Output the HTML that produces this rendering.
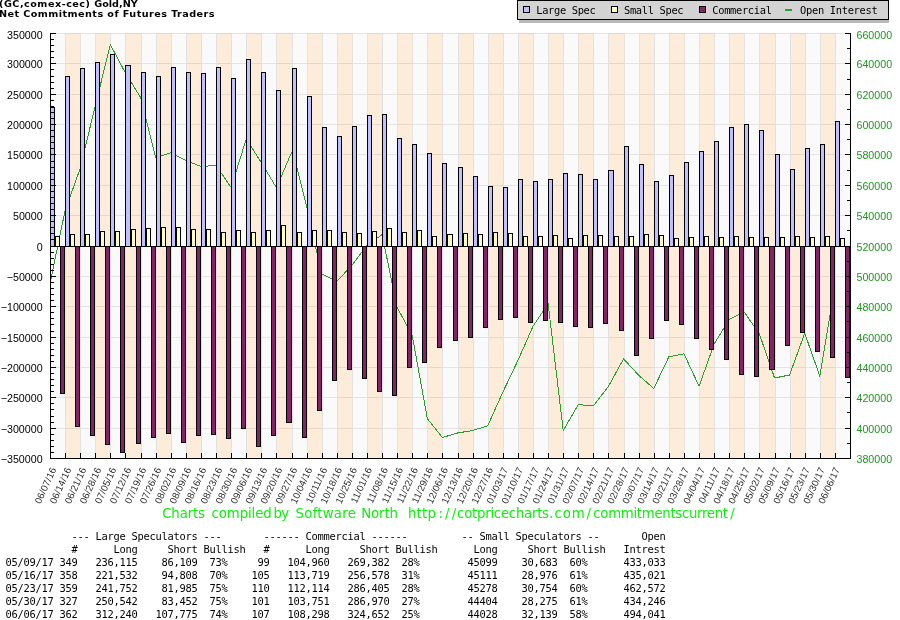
<!DOCTYPE html>
<html><head><meta charset="utf-8"><title>Net Commitments of Futures Traders</title>
<style>
html,body{margin:0;padding:0;background:#fff;}
body{width:900px;height:620px;position:relative;overflow:hidden;}
.t{position:absolute;left:-1px;white-space:pre;font-family:"DejaVu Sans","Liberation Sans",sans-serif;font-weight:bold;font-size:8px;line-height:10px;color:#000;transform-origin:0 0;transform:scaleX(1.205);letter-spacing:0.3px;}
.f{position:absolute;left:162.5px;top:506px;white-space:pre;font-family:"DejaVu Sans","Liberation Sans",sans-serif;font-size:13.33px;line-height:16px;color:#0cf00c;letter-spacing:0.185px;}
.f span{position:absolute;top:0;}
pre.tb{position:absolute;left:5.4px;top:529.7px;margin:0;font-family:"DejaVu Sans Mono","Liberation Mono",monospace;font-size:10.4px;line-height:13px;letter-spacing:-0.255px;color:#000;}
</style></head><body><div id="w" style="position:absolute;left:0;top:0;width:900px;height:620px;will-change:transform;">
<svg width="900" height="620" viewBox="0 0 900 620" style="position:absolute;left:0;top:0">
<g shape-rendering="crispEdges">
<rect x="50" y="33" width="800" height="425" fill="#fafafa"/>
<rect x="65" y="33" width="15" height="425" fill="#fdecd9"/>
<rect x="95" y="33" width="15" height="425" fill="#fdecd9"/>
<rect x="125" y="33" width="16" height="425" fill="#fdecd9"/>
<rect x="156" y="33" width="15" height="425" fill="#fdecd9"/>
<rect x="186" y="33" width="15" height="425" fill="#fdecd9"/>
<rect x="216" y="33" width="15" height="425" fill="#fdecd9"/>
<rect x="246" y="33" width="15" height="425" fill="#fdecd9"/>
<rect x="276" y="33" width="16" height="425" fill="#fdecd9"/>
<rect x="307" y="33" width="15" height="425" fill="#fdecd9"/>
<rect x="337" y="33" width="15" height="425" fill="#fdecd9"/>
<rect x="367" y="33" width="15" height="425" fill="#fdecd9"/>
<rect x="397" y="33" width="15" height="425" fill="#fdecd9"/>
<rect x="427" y="33" width="15" height="425" fill="#fdecd9"/>
<rect x="458" y="33" width="15" height="425" fill="#fdecd9"/>
<rect x="488" y="33" width="15" height="425" fill="#fdecd9"/>
<rect x="518" y="33" width="15" height="425" fill="#fdecd9"/>
<rect x="548" y="33" width="15" height="425" fill="#fdecd9"/>
<rect x="578" y="33" width="15" height="425" fill="#fdecd9"/>
<rect x="608" y="33" width="16" height="425" fill="#fdecd9"/>
<rect x="639" y="33" width="15" height="425" fill="#fdecd9"/>
<rect x="669" y="33" width="15" height="425" fill="#fdecd9"/>
<rect x="699" y="33" width="15" height="425" fill="#fdecd9"/>
<rect x="729" y="33" width="15" height="425" fill="#fdecd9"/>
<rect x="759" y="33" width="16" height="425" fill="#fdecd9"/>
<rect x="790" y="33" width="15" height="425" fill="#fdecd9"/>
<rect x="820" y="33" width="15" height="425" fill="#fdecd9"/>
<rect x="50" y="33" width="800" height="1" fill="rgba(20,10,0,0.095)"/>
<rect x="50" y="63" width="800" height="1" fill="rgba(20,10,0,0.095)"/>
<rect x="50" y="94" width="800" height="1" fill="rgba(20,10,0,0.095)"/>
<rect x="50" y="124" width="800" height="1" fill="rgba(20,10,0,0.095)"/>
<rect x="50" y="154" width="800" height="1" fill="rgba(20,10,0,0.095)"/>
<rect x="50" y="185" width="800" height="1" fill="rgba(20,10,0,0.095)"/>
<rect x="50" y="215" width="800" height="1" fill="rgba(20,10,0,0.095)"/>
<rect x="50" y="246" width="800" height="1" fill="rgba(20,10,0,0.095)"/>
<rect x="50" y="276" width="800" height="1" fill="rgba(20,10,0,0.095)"/>
<rect x="50" y="306" width="800" height="1" fill="rgba(20,10,0,0.095)"/>
<rect x="50" y="337" width="800" height="1" fill="rgba(20,10,0,0.095)"/>
<rect x="50" y="367" width="800" height="1" fill="rgba(20,10,0,0.095)"/>
<rect x="50" y="397" width="800" height="1" fill="rgba(20,10,0,0.095)"/>
<rect x="50" y="428" width="800" height="1" fill="rgba(20,10,0,0.095)"/>
<rect x="50" y="458" width="800" height="1" fill="rgba(20,10,0,0.095)"/>
<rect x="65" y="33" width="1" height="425" fill="#e2e2e3"/>
<rect x="80" y="33" width="1" height="425" fill="#e2e2e3"/>
<rect x="95" y="33" width="1" height="425" fill="#e2e2e3"/>
<rect x="110" y="33" width="1" height="425" fill="#e2e2e3"/>
<rect x="125" y="33" width="1" height="425" fill="#e2e2e3"/>
<rect x="141" y="33" width="1" height="425" fill="#e2e2e3"/>
<rect x="156" y="33" width="1" height="425" fill="#e2e2e3"/>
<rect x="171" y="33" width="1" height="425" fill="#e2e2e3"/>
<rect x="186" y="33" width="1" height="425" fill="#e2e2e3"/>
<rect x="201" y="33" width="1" height="425" fill="#e2e2e3"/>
<rect x="216" y="33" width="1" height="425" fill="#e2e2e3"/>
<rect x="231" y="33" width="1" height="425" fill="#e2e2e3"/>
<rect x="246" y="33" width="1" height="425" fill="#e2e2e3"/>
<rect x="261" y="33" width="1" height="425" fill="#e2e2e3"/>
<rect x="276" y="33" width="1" height="425" fill="#e2e2e3"/>
<rect x="292" y="33" width="1" height="425" fill="#e2e2e3"/>
<rect x="307" y="33" width="1" height="425" fill="#e2e2e3"/>
<rect x="322" y="33" width="1" height="425" fill="#e2e2e3"/>
<rect x="337" y="33" width="1" height="425" fill="#e2e2e3"/>
<rect x="352" y="33" width="1" height="425" fill="#e2e2e3"/>
<rect x="367" y="33" width="1" height="425" fill="#e2e2e3"/>
<rect x="382" y="33" width="1" height="425" fill="#e2e2e3"/>
<rect x="397" y="33" width="1" height="425" fill="#e2e2e3"/>
<rect x="412" y="33" width="1" height="425" fill="#e2e2e3"/>
<rect x="427" y="33" width="1" height="425" fill="#e2e2e3"/>
<rect x="442" y="33" width="1" height="425" fill="#e2e2e3"/>
<rect x="458" y="33" width="1" height="425" fill="#e2e2e3"/>
<rect x="473" y="33" width="1" height="425" fill="#e2e2e3"/>
<rect x="488" y="33" width="1" height="425" fill="#e2e2e3"/>
<rect x="503" y="33" width="1" height="425" fill="#e2e2e3"/>
<rect x="518" y="33" width="1" height="425" fill="#e2e2e3"/>
<rect x="533" y="33" width="1" height="425" fill="#e2e2e3"/>
<rect x="548" y="33" width="1" height="425" fill="#e2e2e3"/>
<rect x="563" y="33" width="1" height="425" fill="#e2e2e3"/>
<rect x="578" y="33" width="1" height="425" fill="#e2e2e3"/>
<rect x="593" y="33" width="1" height="425" fill="#e2e2e3"/>
<rect x="608" y="33" width="1" height="425" fill="#e2e2e3"/>
<rect x="624" y="33" width="1" height="425" fill="#e2e2e3"/>
<rect x="639" y="33" width="1" height="425" fill="#e2e2e3"/>
<rect x="654" y="33" width="1" height="425" fill="#e2e2e3"/>
<rect x="669" y="33" width="1" height="425" fill="#e2e2e3"/>
<rect x="684" y="33" width="1" height="425" fill="#e2e2e3"/>
<rect x="699" y="33" width="1" height="425" fill="#e2e2e3"/>
<rect x="714" y="33" width="1" height="425" fill="#e2e2e3"/>
<rect x="729" y="33" width="1" height="425" fill="#e2e2e3"/>
<rect x="744" y="33" width="1" height="425" fill="#e2e2e3"/>
<rect x="759" y="33" width="1" height="425" fill="#e2e2e3"/>
<rect x="775" y="33" width="1" height="425" fill="#e2e2e3"/>
<rect x="790" y="33" width="1" height="425" fill="#e2e2e3"/>
<rect x="805" y="33" width="1" height="425" fill="#e2e2e3"/>
<rect x="820" y="33" width="1" height="425" fill="#e2e2e3"/>
<rect x="835" y="33" width="1" height="425" fill="#e2e2e3"/>
</g>
<clipPath id="pc"><rect x="51" y="33" width="799" height="425"/></clipPath>
<polyline shape-rendering="crispEdges" clip-path="url(#pc)" points="50.00,283.50 65.09,210.50 80.19,168.50 95.28,105.50 110.38,44.70 125.47,73.00 140.57,97.50 155.66,158.00 170.75,152.70 185.85,160.50 200.94,166.50 216.04,165.50 231.13,187.50 246.23,139.10 261.32,162.50 276.42,187.70 291.51,152.50 297.20,168.60 306.60,206.50 321.70,274.00 336.79,281.30 351.89,265.50 366.98,245.20 382.08,234.70 397.17,307.50 412.26,335.50 427.36,418.80 442.45,437.50 457.55,433.00 472.64,430.50 487.74,425.80 502.83,392.20 517.92,360.50 533.02,326.30 548.11,303.50 563.21,430.50 578.30,404.70 593.40,405.80 608.49,386.30 623.58,358.80 638.68,375.30 653.77,388.50 668.87,356.80 683.96,353.80 699.06,386.30 714.15,344.00 729.25,319.20 744.34,312.20 759.43,334.00 774.53,378.00 789.62,375.00 804.72,333.20 819.81,376.20 834.91,285.40" fill="none" stroke="#2b9d2b" stroke-width="1.0" stroke-linejoin="round"/>
<g shape-rendering="crispEdges">
<rect x="50" y="107" width="5" height="140" fill="#000"/>
<rect x="51" y="108" width="3" height="138" fill="#c0c0ff"/>
<rect x="55" y="236" width="5" height="11" fill="#000"/>
<rect x="56" y="237" width="3" height="9" fill="#ffffc0"/>
<rect x="60" y="246" width="5" height="148" fill="#000"/>
<rect x="61" y="247" width="3" height="146" fill="#852268"/>
<rect x="65" y="76" width="5" height="171" fill="#000"/>
<rect x="66" y="77" width="3" height="169" fill="#c0c0ff"/>
<rect x="70" y="234" width="5" height="13" fill="#000"/>
<rect x="71" y="235" width="3" height="11" fill="#ffffc0"/>
<rect x="75" y="246" width="5" height="181" fill="#000"/>
<rect x="76" y="247" width="3" height="179" fill="#852268"/>
<rect x="80" y="68" width="5" height="179" fill="#000"/>
<rect x="81" y="69" width="3" height="177" fill="#c0c0ff"/>
<rect x="85" y="234" width="5" height="13" fill="#000"/>
<rect x="86" y="235" width="3" height="11" fill="#ffffc0"/>
<rect x="90" y="246" width="5" height="190" fill="#000"/>
<rect x="91" y="247" width="3" height="188" fill="#852268"/>
<rect x="95" y="62" width="5" height="185" fill="#000"/>
<rect x="96" y="63" width="3" height="183" fill="#c0c0ff"/>
<rect x="100" y="231" width="5" height="16" fill="#000"/>
<rect x="101" y="232" width="3" height="14" fill="#ffffc0"/>
<rect x="105" y="246" width="5" height="199" fill="#000"/>
<rect x="106" y="247" width="3" height="197" fill="#852268"/>
<rect x="110" y="54" width="5" height="193" fill="#000"/>
<rect x="111" y="55" width="3" height="191" fill="#c0c0ff"/>
<rect x="115" y="231" width="5" height="16" fill="#000"/>
<rect x="116" y="232" width="3" height="14" fill="#ffffc0"/>
<rect x="120" y="246" width="5" height="207" fill="#000"/>
<rect x="121" y="247" width="3" height="205" fill="#852268"/>
<rect x="125" y="65" width="6" height="182" fill="#000"/>
<rect x="126" y="66" width="4" height="180" fill="#c0c0ff"/>
<rect x="131" y="229" width="5" height="18" fill="#000"/>
<rect x="132" y="230" width="3" height="16" fill="#ffffc0"/>
<rect x="136" y="246" width="5" height="198" fill="#000"/>
<rect x="137" y="247" width="3" height="196" fill="#852268"/>
<rect x="141" y="72" width="5" height="175" fill="#000"/>
<rect x="142" y="73" width="3" height="173" fill="#c0c0ff"/>
<rect x="146" y="228" width="5" height="19" fill="#000"/>
<rect x="147" y="229" width="3" height="17" fill="#ffffc0"/>
<rect x="151" y="246" width="5" height="192" fill="#000"/>
<rect x="152" y="247" width="3" height="190" fill="#852268"/>
<rect x="156" y="76" width="5" height="171" fill="#000"/>
<rect x="157" y="77" width="3" height="169" fill="#c0c0ff"/>
<rect x="161" y="227" width="5" height="20" fill="#000"/>
<rect x="162" y="228" width="3" height="18" fill="#ffffc0"/>
<rect x="166" y="246" width="5" height="188" fill="#000"/>
<rect x="167" y="247" width="3" height="186" fill="#852268"/>
<rect x="171" y="67" width="5" height="180" fill="#000"/>
<rect x="172" y="68" width="3" height="178" fill="#c0c0ff"/>
<rect x="176" y="227" width="5" height="20" fill="#000"/>
<rect x="177" y="228" width="3" height="18" fill="#ffffc0"/>
<rect x="181" y="246" width="5" height="197" fill="#000"/>
<rect x="182" y="247" width="3" height="195" fill="#852268"/>
<rect x="186" y="72" width="5" height="175" fill="#000"/>
<rect x="187" y="73" width="3" height="173" fill="#c0c0ff"/>
<rect x="191" y="229" width="5" height="18" fill="#000"/>
<rect x="192" y="230" width="3" height="16" fill="#ffffc0"/>
<rect x="196" y="246" width="5" height="190" fill="#000"/>
<rect x="197" y="247" width="3" height="188" fill="#852268"/>
<rect x="201" y="73" width="5" height="174" fill="#000"/>
<rect x="202" y="74" width="3" height="172" fill="#c0c0ff"/>
<rect x="206" y="229" width="5" height="18" fill="#000"/>
<rect x="207" y="230" width="3" height="16" fill="#ffffc0"/>
<rect x="211" y="246" width="5" height="189" fill="#000"/>
<rect x="212" y="247" width="3" height="187" fill="#852268"/>
<rect x="216" y="67" width="5" height="180" fill="#000"/>
<rect x="217" y="68" width="3" height="178" fill="#c0c0ff"/>
<rect x="221" y="232" width="5" height="15" fill="#000"/>
<rect x="222" y="233" width="3" height="13" fill="#ffffc0"/>
<rect x="226" y="246" width="5" height="193" fill="#000"/>
<rect x="227" y="247" width="3" height="191" fill="#852268"/>
<rect x="231" y="78" width="5" height="169" fill="#000"/>
<rect x="232" y="79" width="3" height="167" fill="#c0c0ff"/>
<rect x="236" y="230" width="5" height="17" fill="#000"/>
<rect x="237" y="231" width="3" height="15" fill="#ffffc0"/>
<rect x="241" y="246" width="5" height="183" fill="#000"/>
<rect x="242" y="247" width="3" height="181" fill="#852268"/>
<rect x="246" y="59" width="5" height="188" fill="#000"/>
<rect x="247" y="60" width="3" height="186" fill="#c0c0ff"/>
<rect x="251" y="232" width="5" height="15" fill="#000"/>
<rect x="252" y="233" width="3" height="13" fill="#ffffc0"/>
<rect x="256" y="246" width="5" height="201" fill="#000"/>
<rect x="257" y="247" width="3" height="199" fill="#852268"/>
<rect x="261" y="72" width="5" height="175" fill="#000"/>
<rect x="262" y="73" width="3" height="173" fill="#c0c0ff"/>
<rect x="266" y="230" width="5" height="17" fill="#000"/>
<rect x="267" y="231" width="3" height="15" fill="#ffffc0"/>
<rect x="271" y="246" width="5" height="190" fill="#000"/>
<rect x="272" y="247" width="3" height="188" fill="#852268"/>
<rect x="276" y="90" width="5" height="157" fill="#000"/>
<rect x="277" y="91" width="3" height="155" fill="#c0c0ff"/>
<rect x="281" y="225" width="5" height="22" fill="#000"/>
<rect x="282" y="226" width="3" height="20" fill="#ffffc0"/>
<rect x="286" y="246" width="6" height="177" fill="#000"/>
<rect x="287" y="247" width="4" height="175" fill="#852268"/>
<rect x="292" y="68" width="5" height="179" fill="#000"/>
<rect x="293" y="69" width="3" height="177" fill="#c0c0ff"/>
<rect x="297" y="232" width="5" height="15" fill="#000"/>
<rect x="298" y="233" width="3" height="13" fill="#ffffc0"/>
<rect x="302" y="246" width="5" height="192" fill="#000"/>
<rect x="303" y="247" width="3" height="190" fill="#852268"/>
<rect x="307" y="96" width="5" height="151" fill="#000"/>
<rect x="308" y="97" width="3" height="149" fill="#c0c0ff"/>
<rect x="312" y="230" width="5" height="17" fill="#000"/>
<rect x="313" y="231" width="3" height="15" fill="#ffffc0"/>
<rect x="317" y="246" width="5" height="165" fill="#000"/>
<rect x="318" y="247" width="3" height="163" fill="#852268"/>
<rect x="322" y="127" width="5" height="120" fill="#000"/>
<rect x="323" y="128" width="3" height="118" fill="#c0c0ff"/>
<rect x="327" y="230" width="5" height="17" fill="#000"/>
<rect x="328" y="231" width="3" height="15" fill="#ffffc0"/>
<rect x="332" y="246" width="5" height="135" fill="#000"/>
<rect x="333" y="247" width="3" height="133" fill="#852268"/>
<rect x="337" y="136" width="5" height="111" fill="#000"/>
<rect x="338" y="137" width="3" height="109" fill="#c0c0ff"/>
<rect x="342" y="232" width="5" height="15" fill="#000"/>
<rect x="343" y="233" width="3" height="13" fill="#ffffc0"/>
<rect x="347" y="246" width="5" height="124" fill="#000"/>
<rect x="348" y="247" width="3" height="122" fill="#852268"/>
<rect x="352" y="126" width="5" height="121" fill="#000"/>
<rect x="353" y="127" width="3" height="119" fill="#c0c0ff"/>
<rect x="357" y="233" width="5" height="14" fill="#000"/>
<rect x="358" y="234" width="3" height="12" fill="#ffffc0"/>
<rect x="362" y="246" width="5" height="133" fill="#000"/>
<rect x="363" y="247" width="3" height="131" fill="#852268"/>
<rect x="367" y="115" width="5" height="132" fill="#000"/>
<rect x="368" y="116" width="3" height="130" fill="#c0c0ff"/>
<rect x="372" y="231" width="5" height="16" fill="#000"/>
<rect x="373" y="232" width="3" height="14" fill="#ffffc0"/>
<rect x="377" y="246" width="5" height="146" fill="#000"/>
<rect x="378" y="247" width="3" height="144" fill="#852268"/>
<rect x="382" y="114" width="5" height="133" fill="#000"/>
<rect x="383" y="115" width="3" height="131" fill="#c0c0ff"/>
<rect x="387" y="228" width="5" height="19" fill="#000"/>
<rect x="388" y="229" width="3" height="17" fill="#ffffc0"/>
<rect x="392" y="246" width="5" height="150" fill="#000"/>
<rect x="393" y="247" width="3" height="148" fill="#852268"/>
<rect x="397" y="138" width="5" height="109" fill="#000"/>
<rect x="398" y="139" width="3" height="107" fill="#c0c0ff"/>
<rect x="402" y="232" width="5" height="15" fill="#000"/>
<rect x="403" y="233" width="3" height="13" fill="#ffffc0"/>
<rect x="407" y="246" width="5" height="122" fill="#000"/>
<rect x="408" y="247" width="3" height="120" fill="#852268"/>
<rect x="412" y="144" width="5" height="103" fill="#000"/>
<rect x="413" y="145" width="3" height="101" fill="#c0c0ff"/>
<rect x="417" y="230" width="5" height="17" fill="#000"/>
<rect x="418" y="231" width="3" height="15" fill="#ffffc0"/>
<rect x="422" y="246" width="5" height="117" fill="#000"/>
<rect x="423" y="247" width="3" height="115" fill="#852268"/>
<rect x="427" y="153" width="5" height="94" fill="#000"/>
<rect x="428" y="154" width="3" height="92" fill="#c0c0ff"/>
<rect x="432" y="236" width="5" height="11" fill="#000"/>
<rect x="433" y="237" width="3" height="9" fill="#ffffc0"/>
<rect x="437" y="246" width="5" height="102" fill="#000"/>
<rect x="438" y="247" width="3" height="100" fill="#852268"/>
<rect x="442" y="163" width="5" height="84" fill="#000"/>
<rect x="443" y="164" width="3" height="82" fill="#c0c0ff"/>
<rect x="447" y="234" width="6" height="13" fill="#000"/>
<rect x="448" y="235" width="4" height="11" fill="#ffffc0"/>
<rect x="453" y="246" width="5" height="95" fill="#000"/>
<rect x="454" y="247" width="3" height="93" fill="#852268"/>
<rect x="458" y="167" width="5" height="80" fill="#000"/>
<rect x="459" y="168" width="3" height="78" fill="#c0c0ff"/>
<rect x="463" y="233" width="5" height="14" fill="#000"/>
<rect x="464" y="234" width="3" height="12" fill="#ffffc0"/>
<rect x="468" y="246" width="5" height="92" fill="#000"/>
<rect x="469" y="247" width="3" height="90" fill="#852268"/>
<rect x="473" y="176" width="5" height="71" fill="#000"/>
<rect x="474" y="177" width="3" height="69" fill="#c0c0ff"/>
<rect x="478" y="234" width="5" height="13" fill="#000"/>
<rect x="479" y="235" width="3" height="11" fill="#ffffc0"/>
<rect x="483" y="246" width="5" height="82" fill="#000"/>
<rect x="484" y="247" width="3" height="80" fill="#852268"/>
<rect x="488" y="186" width="5" height="61" fill="#000"/>
<rect x="489" y="187" width="3" height="59" fill="#c0c0ff"/>
<rect x="493" y="232" width="5" height="15" fill="#000"/>
<rect x="494" y="233" width="3" height="13" fill="#ffffc0"/>
<rect x="498" y="246" width="5" height="74" fill="#000"/>
<rect x="499" y="247" width="3" height="72" fill="#852268"/>
<rect x="503" y="187" width="5" height="60" fill="#000"/>
<rect x="504" y="188" width="3" height="58" fill="#c0c0ff"/>
<rect x="508" y="233" width="5" height="14" fill="#000"/>
<rect x="509" y="234" width="3" height="12" fill="#ffffc0"/>
<rect x="513" y="246" width="5" height="72" fill="#000"/>
<rect x="514" y="247" width="3" height="70" fill="#852268"/>
<rect x="518" y="179" width="5" height="68" fill="#000"/>
<rect x="519" y="180" width="3" height="66" fill="#c0c0ff"/>
<rect x="523" y="236" width="5" height="11" fill="#000"/>
<rect x="524" y="237" width="3" height="9" fill="#ffffc0"/>
<rect x="528" y="246" width="5" height="77" fill="#000"/>
<rect x="529" y="247" width="3" height="75" fill="#852268"/>
<rect x="533" y="181" width="5" height="66" fill="#000"/>
<rect x="534" y="182" width="3" height="64" fill="#c0c0ff"/>
<rect x="538" y="236" width="5" height="11" fill="#000"/>
<rect x="539" y="237" width="3" height="9" fill="#ffffc0"/>
<rect x="543" y="246" width="5" height="75" fill="#000"/>
<rect x="544" y="247" width="3" height="73" fill="#852268"/>
<rect x="548" y="179" width="5" height="68" fill="#000"/>
<rect x="549" y="180" width="3" height="66" fill="#c0c0ff"/>
<rect x="553" y="235" width="5" height="12" fill="#000"/>
<rect x="554" y="236" width="3" height="10" fill="#ffffc0"/>
<rect x="558" y="246" width="5" height="77" fill="#000"/>
<rect x="559" y="247" width="3" height="75" fill="#852268"/>
<rect x="563" y="173" width="5" height="74" fill="#000"/>
<rect x="564" y="174" width="3" height="72" fill="#c0c0ff"/>
<rect x="568" y="238" width="5" height="9" fill="#000"/>
<rect x="569" y="239" width="3" height="7" fill="#ffffc0"/>
<rect x="573" y="246" width="5" height="81" fill="#000"/>
<rect x="574" y="247" width="3" height="79" fill="#852268"/>
<rect x="578" y="174" width="5" height="73" fill="#000"/>
<rect x="579" y="175" width="3" height="71" fill="#c0c0ff"/>
<rect x="583" y="235" width="5" height="12" fill="#000"/>
<rect x="584" y="236" width="3" height="10" fill="#ffffc0"/>
<rect x="588" y="246" width="5" height="82" fill="#000"/>
<rect x="589" y="247" width="3" height="80" fill="#852268"/>
<rect x="593" y="179" width="5" height="68" fill="#000"/>
<rect x="594" y="180" width="3" height="66" fill="#c0c0ff"/>
<rect x="598" y="235" width="5" height="12" fill="#000"/>
<rect x="599" y="236" width="3" height="10" fill="#ffffc0"/>
<rect x="603" y="246" width="5" height="78" fill="#000"/>
<rect x="604" y="247" width="3" height="76" fill="#852268"/>
<rect x="608" y="170" width="6" height="77" fill="#000"/>
<rect x="609" y="171" width="4" height="75" fill="#c0c0ff"/>
<rect x="614" y="236" width="5" height="11" fill="#000"/>
<rect x="615" y="237" width="3" height="9" fill="#ffffc0"/>
<rect x="619" y="246" width="5" height="85" fill="#000"/>
<rect x="620" y="247" width="3" height="83" fill="#852268"/>
<rect x="624" y="146" width="5" height="101" fill="#000"/>
<rect x="625" y="147" width="3" height="99" fill="#c0c0ff"/>
<rect x="629" y="236" width="5" height="11" fill="#000"/>
<rect x="630" y="237" width="3" height="9" fill="#ffffc0"/>
<rect x="634" y="246" width="5" height="110" fill="#000"/>
<rect x="635" y="247" width="3" height="108" fill="#852268"/>
<rect x="639" y="164" width="5" height="83" fill="#000"/>
<rect x="640" y="165" width="3" height="81" fill="#c0c0ff"/>
<rect x="644" y="234" width="5" height="13" fill="#000"/>
<rect x="645" y="235" width="3" height="11" fill="#ffffc0"/>
<rect x="649" y="246" width="5" height="93" fill="#000"/>
<rect x="650" y="247" width="3" height="91" fill="#852268"/>
<rect x="654" y="181" width="5" height="66" fill="#000"/>
<rect x="655" y="182" width="3" height="64" fill="#c0c0ff"/>
<rect x="659" y="235" width="5" height="12" fill="#000"/>
<rect x="660" y="236" width="3" height="10" fill="#ffffc0"/>
<rect x="664" y="246" width="5" height="75" fill="#000"/>
<rect x="665" y="247" width="3" height="73" fill="#852268"/>
<rect x="669" y="175" width="5" height="72" fill="#000"/>
<rect x="670" y="176" width="3" height="70" fill="#c0c0ff"/>
<rect x="674" y="238" width="5" height="9" fill="#000"/>
<rect x="675" y="239" width="3" height="7" fill="#ffffc0"/>
<rect x="679" y="246" width="5" height="79" fill="#000"/>
<rect x="680" y="247" width="3" height="77" fill="#852268"/>
<rect x="684" y="162" width="5" height="85" fill="#000"/>
<rect x="685" y="163" width="3" height="83" fill="#c0c0ff"/>
<rect x="689" y="237" width="5" height="10" fill="#000"/>
<rect x="690" y="238" width="3" height="8" fill="#ffffc0"/>
<rect x="694" y="246" width="5" height="93" fill="#000"/>
<rect x="695" y="247" width="3" height="91" fill="#852268"/>
<rect x="699" y="151" width="5" height="96" fill="#000"/>
<rect x="700" y="152" width="3" height="94" fill="#c0c0ff"/>
<rect x="704" y="236" width="5" height="11" fill="#000"/>
<rect x="705" y="237" width="3" height="9" fill="#ffffc0"/>
<rect x="709" y="246" width="5" height="104" fill="#000"/>
<rect x="710" y="247" width="3" height="102" fill="#852268"/>
<rect x="714" y="141" width="5" height="106" fill="#000"/>
<rect x="715" y="142" width="3" height="104" fill="#c0c0ff"/>
<rect x="719" y="237" width="5" height="10" fill="#000"/>
<rect x="720" y="238" width="3" height="8" fill="#ffffc0"/>
<rect x="724" y="246" width="5" height="114" fill="#000"/>
<rect x="725" y="247" width="3" height="112" fill="#852268"/>
<rect x="729" y="127" width="5" height="120" fill="#000"/>
<rect x="730" y="128" width="3" height="118" fill="#c0c0ff"/>
<rect x="734" y="236" width="5" height="11" fill="#000"/>
<rect x="735" y="237" width="3" height="9" fill="#ffffc0"/>
<rect x="739" y="246" width="5" height="129" fill="#000"/>
<rect x="740" y="247" width="3" height="127" fill="#852268"/>
<rect x="744" y="124" width="5" height="123" fill="#000"/>
<rect x="745" y="125" width="3" height="121" fill="#c0c0ff"/>
<rect x="749" y="237" width="5" height="10" fill="#000"/>
<rect x="750" y="238" width="3" height="8" fill="#ffffc0"/>
<rect x="754" y="246" width="5" height="131" fill="#000"/>
<rect x="755" y="247" width="3" height="129" fill="#852268"/>
<rect x="759" y="130" width="5" height="117" fill="#000"/>
<rect x="760" y="131" width="3" height="115" fill="#c0c0ff"/>
<rect x="764" y="237" width="5" height="10" fill="#000"/>
<rect x="765" y="238" width="3" height="8" fill="#ffffc0"/>
<rect x="769" y="246" width="6" height="124" fill="#000"/>
<rect x="770" y="247" width="4" height="122" fill="#852268"/>
<rect x="775" y="154" width="5" height="93" fill="#000"/>
<rect x="776" y="155" width="3" height="91" fill="#c0c0ff"/>
<rect x="780" y="237" width="5" height="10" fill="#000"/>
<rect x="781" y="238" width="3" height="8" fill="#ffffc0"/>
<rect x="785" y="246" width="5" height="100" fill="#000"/>
<rect x="786" y="247" width="3" height="98" fill="#852268"/>
<rect x="790" y="169" width="5" height="78" fill="#000"/>
<rect x="791" y="170" width="3" height="76" fill="#c0c0ff"/>
<rect x="795" y="236" width="5" height="11" fill="#000"/>
<rect x="796" y="237" width="3" height="9" fill="#ffffc0"/>
<rect x="800" y="246" width="5" height="87" fill="#000"/>
<rect x="801" y="247" width="3" height="85" fill="#852268"/>
<rect x="805" y="148" width="5" height="99" fill="#000"/>
<rect x="806" y="149" width="3" height="97" fill="#c0c0ff"/>
<rect x="810" y="237" width="5" height="10" fill="#000"/>
<rect x="811" y="238" width="3" height="8" fill="#ffffc0"/>
<rect x="815" y="246" width="5" height="106" fill="#000"/>
<rect x="816" y="247" width="3" height="104" fill="#852268"/>
<rect x="820" y="144" width="5" height="103" fill="#000"/>
<rect x="821" y="145" width="3" height="101" fill="#c0c0ff"/>
<rect x="825" y="236" width="5" height="11" fill="#000"/>
<rect x="826" y="237" width="3" height="9" fill="#ffffc0"/>
<rect x="830" y="246" width="5" height="112" fill="#000"/>
<rect x="831" y="247" width="3" height="110" fill="#852268"/>
<rect x="835" y="121" width="5" height="126" fill="#000"/>
<rect x="836" y="122" width="3" height="124" fill="#c0c0ff"/>
<rect x="840" y="238" width="5" height="9" fill="#000"/>
<rect x="841" y="239" width="3" height="7" fill="#ffffc0"/>
<rect x="845" y="246" width="5" height="132" fill="#000"/>
<rect x="846" y="247" width="3" height="130" fill="#852268"/>
<rect x="50" y="246" width="800" height="1" fill="#000"/>
<rect x="50" y="33" width="1" height="426" fill="#000"/>
<rect x="850" y="33" width="1" height="426" fill="#000"/>
<rect x="50" y="458" width="801" height="1" fill="#000"/>
<rect x="50" y="33" width="6" height="1" fill="#000"/>
<rect x="50" y="39" width="4" height="1" fill="#000"/>
<rect x="50" y="45" width="4" height="1" fill="#000"/>
<rect x="50" y="51" width="4" height="1" fill="#000"/>
<rect x="50" y="57" width="4" height="1" fill="#000"/>
<rect x="50" y="63" width="6" height="1" fill="#000"/>
<rect x="50" y="69" width="4" height="1" fill="#000"/>
<rect x="50" y="76" width="4" height="1" fill="#000"/>
<rect x="50" y="82" width="4" height="1" fill="#000"/>
<rect x="50" y="88" width="4" height="1" fill="#000"/>
<rect x="50" y="94" width="6" height="1" fill="#000"/>
<rect x="50" y="100" width="4" height="1" fill="#000"/>
<rect x="50" y="106" width="4" height="1" fill="#000"/>
<rect x="50" y="112" width="4" height="1" fill="#000"/>
<rect x="50" y="118" width="4" height="1" fill="#000"/>
<rect x="50" y="124" width="6" height="1" fill="#000"/>
<rect x="50" y="130" width="4" height="1" fill="#000"/>
<rect x="50" y="136" width="4" height="1" fill="#000"/>
<rect x="50" y="142" width="4" height="1" fill="#000"/>
<rect x="50" y="148" width="4" height="1" fill="#000"/>
<rect x="50" y="154" width="6" height="1" fill="#000"/>
<rect x="50" y="161" width="4" height="1" fill="#000"/>
<rect x="50" y="167" width="4" height="1" fill="#000"/>
<rect x="50" y="173" width="4" height="1" fill="#000"/>
<rect x="50" y="179" width="4" height="1" fill="#000"/>
<rect x="50" y="185" width="6" height="1" fill="#000"/>
<rect x="50" y="191" width="4" height="1" fill="#000"/>
<rect x="50" y="197" width="4" height="1" fill="#000"/>
<rect x="50" y="203" width="4" height="1" fill="#000"/>
<rect x="50" y="209" width="4" height="1" fill="#000"/>
<rect x="50" y="215" width="6" height="1" fill="#000"/>
<rect x="50" y="221" width="4" height="1" fill="#000"/>
<rect x="50" y="227" width="4" height="1" fill="#000"/>
<rect x="50" y="233" width="4" height="1" fill="#000"/>
<rect x="50" y="239" width="4" height="1" fill="#000"/>
<rect x="50" y="246" width="6" height="1" fill="#000"/>
<rect x="50" y="252" width="4" height="1" fill="#000"/>
<rect x="50" y="258" width="4" height="1" fill="#000"/>
<rect x="50" y="264" width="4" height="1" fill="#000"/>
<rect x="50" y="270" width="4" height="1" fill="#000"/>
<rect x="50" y="276" width="6" height="1" fill="#000"/>
<rect x="50" y="282" width="4" height="1" fill="#000"/>
<rect x="50" y="288" width="4" height="1" fill="#000"/>
<rect x="50" y="294" width="4" height="1" fill="#000"/>
<rect x="50" y="300" width="4" height="1" fill="#000"/>
<rect x="50" y="306" width="6" height="1" fill="#000"/>
<rect x="50" y="312" width="4" height="1" fill="#000"/>
<rect x="50" y="318" width="4" height="1" fill="#000"/>
<rect x="50" y="324" width="4" height="1" fill="#000"/>
<rect x="50" y="331" width="4" height="1" fill="#000"/>
<rect x="50" y="337" width="6" height="1" fill="#000"/>
<rect x="50" y="343" width="4" height="1" fill="#000"/>
<rect x="50" y="349" width="4" height="1" fill="#000"/>
<rect x="50" y="355" width="4" height="1" fill="#000"/>
<rect x="50" y="361" width="4" height="1" fill="#000"/>
<rect x="50" y="367" width="6" height="1" fill="#000"/>
<rect x="50" y="373" width="4" height="1" fill="#000"/>
<rect x="50" y="379" width="4" height="1" fill="#000"/>
<rect x="50" y="385" width="4" height="1" fill="#000"/>
<rect x="50" y="391" width="4" height="1" fill="#000"/>
<rect x="50" y="397" width="6" height="1" fill="#000"/>
<rect x="50" y="403" width="4" height="1" fill="#000"/>
<rect x="50" y="409" width="4" height="1" fill="#000"/>
<rect x="50" y="416" width="4" height="1" fill="#000"/>
<rect x="50" y="422" width="4" height="1" fill="#000"/>
<rect x="50" y="428" width="6" height="1" fill="#000"/>
<rect x="50" y="434" width="4" height="1" fill="#000"/>
<rect x="50" y="440" width="4" height="1" fill="#000"/>
<rect x="50" y="446" width="4" height="1" fill="#000"/>
<rect x="50" y="452" width="4" height="1" fill="#000"/>
<rect x="50" y="458" width="6" height="1" fill="#000"/>
<rect x="845" y="33" width="6" height="1" fill="#000"/>
<rect x="847" y="48" width="4" height="1" fill="#000"/>
<rect x="845" y="63" width="6" height="1" fill="#000"/>
<rect x="847" y="79" width="4" height="1" fill="#000"/>
<rect x="845" y="94" width="6" height="1" fill="#000"/>
<rect x="847" y="109" width="4" height="1" fill="#000"/>
<rect x="845" y="124" width="6" height="1" fill="#000"/>
<rect x="847" y="139" width="4" height="1" fill="#000"/>
<rect x="845" y="154" width="6" height="1" fill="#000"/>
<rect x="847" y="170" width="4" height="1" fill="#000"/>
<rect x="845" y="185" width="6" height="1" fill="#000"/>
<rect x="847" y="200" width="4" height="1" fill="#000"/>
<rect x="845" y="215" width="6" height="1" fill="#000"/>
<rect x="847" y="230" width="4" height="1" fill="#000"/>
<rect x="845" y="246" width="6" height="1" fill="#000"/>
<rect x="847" y="261" width="4" height="1" fill="#000"/>
<rect x="845" y="276" width="6" height="1" fill="#000"/>
<rect x="847" y="291" width="4" height="1" fill="#000"/>
<rect x="845" y="306" width="6" height="1" fill="#000"/>
<rect x="847" y="321" width="4" height="1" fill="#000"/>
<rect x="845" y="337" width="6" height="1" fill="#000"/>
<rect x="847" y="352" width="4" height="1" fill="#000"/>
<rect x="845" y="367" width="6" height="1" fill="#000"/>
<rect x="847" y="382" width="4" height="1" fill="#000"/>
<rect x="845" y="397" width="6" height="1" fill="#000"/>
<rect x="847" y="412" width="4" height="1" fill="#000"/>
<rect x="845" y="428" width="6" height="1" fill="#000"/>
<rect x="847" y="443" width="4" height="1" fill="#000"/>
<rect x="845" y="458" width="6" height="1" fill="#000"/>
<rect x="65" y="453" width="1" height="6" fill="#000"/>
<rect x="80" y="453" width="1" height="6" fill="#000"/>
<rect x="95" y="453" width="1" height="6" fill="#000"/>
<rect x="110" y="453" width="1" height="6" fill="#000"/>
<rect x="125" y="453" width="1" height="6" fill="#000"/>
<rect x="141" y="453" width="1" height="6" fill="#000"/>
<rect x="156" y="453" width="1" height="6" fill="#000"/>
<rect x="171" y="453" width="1" height="6" fill="#000"/>
<rect x="186" y="453" width="1" height="6" fill="#000"/>
<rect x="201" y="453" width="1" height="6" fill="#000"/>
<rect x="216" y="453" width="1" height="6" fill="#000"/>
<rect x="231" y="453" width="1" height="6" fill="#000"/>
<rect x="246" y="453" width="1" height="6" fill="#000"/>
<rect x="261" y="453" width="1" height="6" fill="#000"/>
<rect x="276" y="453" width="1" height="6" fill="#000"/>
<rect x="292" y="453" width="1" height="6" fill="#000"/>
<rect x="307" y="453" width="1" height="6" fill="#000"/>
<rect x="322" y="453" width="1" height="6" fill="#000"/>
<rect x="337" y="453" width="1" height="6" fill="#000"/>
<rect x="352" y="453" width="1" height="6" fill="#000"/>
<rect x="367" y="453" width="1" height="6" fill="#000"/>
<rect x="382" y="453" width="1" height="6" fill="#000"/>
<rect x="397" y="453" width="1" height="6" fill="#000"/>
<rect x="412" y="453" width="1" height="6" fill="#000"/>
<rect x="427" y="453" width="1" height="6" fill="#000"/>
<rect x="442" y="453" width="1" height="6" fill="#000"/>
<rect x="458" y="453" width="1" height="6" fill="#000"/>
<rect x="473" y="453" width="1" height="6" fill="#000"/>
<rect x="488" y="453" width="1" height="6" fill="#000"/>
<rect x="503" y="453" width="1" height="6" fill="#000"/>
<rect x="518" y="453" width="1" height="6" fill="#000"/>
<rect x="533" y="453" width="1" height="6" fill="#000"/>
<rect x="548" y="453" width="1" height="6" fill="#000"/>
<rect x="563" y="453" width="1" height="6" fill="#000"/>
<rect x="578" y="453" width="1" height="6" fill="#000"/>
<rect x="593" y="453" width="1" height="6" fill="#000"/>
<rect x="608" y="453" width="1" height="6" fill="#000"/>
<rect x="624" y="453" width="1" height="6" fill="#000"/>
<rect x="639" y="453" width="1" height="6" fill="#000"/>
<rect x="654" y="453" width="1" height="6" fill="#000"/>
<rect x="669" y="453" width="1" height="6" fill="#000"/>
<rect x="684" y="453" width="1" height="6" fill="#000"/>
<rect x="699" y="453" width="1" height="6" fill="#000"/>
<rect x="714" y="453" width="1" height="6" fill="#000"/>
<rect x="729" y="453" width="1" height="6" fill="#000"/>
<rect x="744" y="453" width="1" height="6" fill="#000"/>
<rect x="759" y="453" width="1" height="6" fill="#000"/>
<rect x="775" y="453" width="1" height="6" fill="#000"/>
<rect x="790" y="453" width="1" height="6" fill="#000"/>
<rect x="805" y="453" width="1" height="6" fill="#000"/>
<rect x="820" y="453" width="1" height="6" fill="#000"/>
<rect x="835" y="453" width="1" height="6" fill="#000"/>
</g>
<g font-family="'Liberation Sans', Arial, sans-serif" font-size="10.67">
<text x="42.6" y="39.00" text-anchor="end" fill="#000">350000</text>
<text x="42.6" y="68.00" text-anchor="end" fill="#000">300000</text>
<text x="42.6" y="99.00" text-anchor="end" fill="#000">250000</text>
<text x="42.6" y="129.00" text-anchor="end" fill="#000">200000</text>
<text x="42.6" y="159.00" text-anchor="end" fill="#000">150000</text>
<text x="42.6" y="190.00" text-anchor="end" fill="#000">100000</text>
<text x="42.6" y="220.00" text-anchor="end" fill="#000">50000</text>
<text x="42.6" y="251.00" text-anchor="end" fill="#000">0</text>
<text x="42.6" y="281.00" text-anchor="end" fill="#000">−50000</text>
<text x="42.6" y="311.00" text-anchor="end" fill="#000">−100000</text>
<text x="42.6" y="342.00" text-anchor="end" fill="#000">−150000</text>
<text x="42.6" y="372.00" text-anchor="end" fill="#000">−200000</text>
<text x="42.6" y="402.00" text-anchor="end" fill="#000">−250000</text>
<text x="42.6" y="433.00" text-anchor="end" fill="#000">−300000</text>
<text x="42.6" y="463.00" text-anchor="end" fill="#000">−350000</text>
<text x="856.5" y="39.00" fill="#20941f">660000</text>
<text x="856.5" y="68.00" fill="#20941f">640000</text>
<text x="856.5" y="99.00" fill="#20941f">620000</text>
<text x="856.5" y="129.00" fill="#20941f">600000</text>
<text x="856.5" y="159.00" fill="#20941f">580000</text>
<text x="856.5" y="190.00" fill="#20941f">560000</text>
<text x="856.5" y="220.00" fill="#20941f">540000</text>
<text x="856.5" y="251.00" fill="#20941f">520000</text>
<text x="856.5" y="281.00" fill="#20941f">500000</text>
<text x="856.5" y="311.00" fill="#20941f">480000</text>
<text x="856.5" y="342.00" fill="#20941f">460000</text>
<text x="856.5" y="372.00" fill="#20941f">440000</text>
<text x="856.5" y="402.00" fill="#20941f">420000</text>
<text x="856.5" y="433.00" fill="#20941f">400000</text>
<text x="856.5" y="463.00" fill="#20941f">380000</text>
<text transform="translate(56.60,469.20) rotate(-65.5)" text-anchor="end" fill="#2a2a2a" font-size="9.7" letter-spacing="0.15">06/07/16</text>
<text transform="translate(71.59,469.20) rotate(-65.5)" text-anchor="end" fill="#2a2a2a" font-size="9.7" letter-spacing="0.15">06/14/16</text>
<text transform="translate(86.58,469.20) rotate(-65.5)" text-anchor="end" fill="#2a2a2a" font-size="9.7" letter-spacing="0.15">06/21/16</text>
<text transform="translate(101.57,469.20) rotate(-65.5)" text-anchor="end" fill="#2a2a2a" font-size="9.7" letter-spacing="0.15">06/28/16</text>
<text transform="translate(116.56,469.20) rotate(-65.5)" text-anchor="end" fill="#2a2a2a" font-size="9.7" letter-spacing="0.15">07/05/16</text>
<text transform="translate(131.55,469.20) rotate(-65.5)" text-anchor="end" fill="#2a2a2a" font-size="9.7" letter-spacing="0.15">07/12/16</text>
<text transform="translate(146.54,469.20) rotate(-65.5)" text-anchor="end" fill="#2a2a2a" font-size="9.7" letter-spacing="0.15">07/19/16</text>
<text transform="translate(161.53,469.20) rotate(-65.5)" text-anchor="end" fill="#2a2a2a" font-size="9.7" letter-spacing="0.15">07/26/16</text>
<text transform="translate(176.52,469.20) rotate(-65.5)" text-anchor="end" fill="#2a2a2a" font-size="9.7" letter-spacing="0.15">08/02/16</text>
<text transform="translate(191.51,469.20) rotate(-65.5)" text-anchor="end" fill="#2a2a2a" font-size="9.7" letter-spacing="0.15">08/09/16</text>
<text transform="translate(206.50,469.20) rotate(-65.5)" text-anchor="end" fill="#2a2a2a" font-size="9.7" letter-spacing="0.15">08/16/16</text>
<text transform="translate(222.49,469.20) rotate(-65.5)" text-anchor="end" fill="#2a2a2a" font-size="9.7" letter-spacing="0.15">08/23/16</text>
<text transform="translate(237.48,469.20) rotate(-65.5)" text-anchor="end" fill="#2a2a2a" font-size="9.7" letter-spacing="0.15">08/30/16</text>
<text transform="translate(252.47,469.20) rotate(-65.5)" text-anchor="end" fill="#2a2a2a" font-size="9.7" letter-spacing="0.15">09/06/16</text>
<text transform="translate(267.47,469.20) rotate(-65.5)" text-anchor="end" fill="#2a2a2a" font-size="9.7" letter-spacing="0.15">09/13/16</text>
<text transform="translate(282.46,469.20) rotate(-65.5)" text-anchor="end" fill="#2a2a2a" font-size="9.7" letter-spacing="0.15">09/20/16</text>
<text transform="translate(297.45,469.20) rotate(-65.5)" text-anchor="end" fill="#2a2a2a" font-size="9.7" letter-spacing="0.15">09/27/16</text>
<text transform="translate(312.44,469.20) rotate(-65.5)" text-anchor="end" fill="#2a2a2a" font-size="9.7" letter-spacing="0.15">10/04/16</text>
<text transform="translate(327.43,469.20) rotate(-65.5)" text-anchor="end" fill="#2a2a2a" font-size="9.7" letter-spacing="0.15">10/11/16</text>
<text transform="translate(342.42,469.20) rotate(-65.5)" text-anchor="end" fill="#2a2a2a" font-size="9.7" letter-spacing="0.15">10/18/16</text>
<text transform="translate(357.41,469.20) rotate(-65.5)" text-anchor="end" fill="#2a2a2a" font-size="9.7" letter-spacing="0.15">10/25/16</text>
<text transform="translate(372.40,469.20) rotate(-65.5)" text-anchor="end" fill="#2a2a2a" font-size="9.7" letter-spacing="0.15">11/01/16</text>
<text transform="translate(388.39,469.20) rotate(-65.5)" text-anchor="end" fill="#2a2a2a" font-size="9.7" letter-spacing="0.15">11/08/16</text>
<text transform="translate(403.38,469.20) rotate(-65.5)" text-anchor="end" fill="#2a2a2a" font-size="9.7" letter-spacing="0.15">11/15/16</text>
<text transform="translate(418.37,469.20) rotate(-65.5)" text-anchor="end" fill="#2a2a2a" font-size="9.7" letter-spacing="0.15">11/22/16</text>
<text transform="translate(433.36,469.20) rotate(-65.5)" text-anchor="end" fill="#2a2a2a" font-size="9.7" letter-spacing="0.15">11/29/16</text>
<text transform="translate(448.35,469.20) rotate(-65.5)" text-anchor="end" fill="#2a2a2a" font-size="9.7" letter-spacing="0.15">12/06/16</text>
<text transform="translate(463.34,469.20) rotate(-65.5)" text-anchor="end" fill="#2a2a2a" font-size="9.7" letter-spacing="0.15">12/13/16</text>
<text transform="translate(478.33,469.20) rotate(-65.5)" text-anchor="end" fill="#2a2a2a" font-size="9.7" letter-spacing="0.15">12/20/16</text>
<text transform="translate(493.32,469.20) rotate(-65.5)" text-anchor="end" fill="#2a2a2a" font-size="9.7" letter-spacing="0.15">12/27/16</text>
<text transform="translate(508.31,469.20) rotate(-65.5)" text-anchor="end" fill="#2a2a2a" font-size="9.7" letter-spacing="0.15">01/03/17</text>
<text transform="translate(523.30,469.20) rotate(-65.5)" text-anchor="end" fill="#2a2a2a" font-size="9.7" letter-spacing="0.15">01/10/17</text>
<text transform="translate(539.29,469.20) rotate(-65.5)" text-anchor="end" fill="#2a2a2a" font-size="9.7" letter-spacing="0.15">01/17/17</text>
<text transform="translate(554.28,469.20) rotate(-65.5)" text-anchor="end" fill="#2a2a2a" font-size="9.7" letter-spacing="0.15">01/24/17</text>
<text transform="translate(569.27,469.20) rotate(-65.5)" text-anchor="end" fill="#2a2a2a" font-size="9.7" letter-spacing="0.15">01/31/17</text>
<text transform="translate(584.26,469.20) rotate(-65.5)" text-anchor="end" fill="#2a2a2a" font-size="9.7" letter-spacing="0.15">02/07/17</text>
<text transform="translate(599.25,469.20) rotate(-65.5)" text-anchor="end" fill="#2a2a2a" font-size="9.7" letter-spacing="0.15">02/14/17</text>
<text transform="translate(614.24,469.20) rotate(-65.5)" text-anchor="end" fill="#2a2a2a" font-size="9.7" letter-spacing="0.15">02/21/17</text>
<text transform="translate(629.23,469.20) rotate(-65.5)" text-anchor="end" fill="#2a2a2a" font-size="9.7" letter-spacing="0.15">02/28/17</text>
<text transform="translate(644.23,469.20) rotate(-65.5)" text-anchor="end" fill="#2a2a2a" font-size="9.7" letter-spacing="0.15">03/07/17</text>
<text transform="translate(659.22,469.20) rotate(-65.5)" text-anchor="end" fill="#2a2a2a" font-size="9.7" letter-spacing="0.15">03/14/17</text>
<text transform="translate(674.21,469.20) rotate(-65.5)" text-anchor="end" fill="#2a2a2a" font-size="9.7" letter-spacing="0.15">03/21/17</text>
<text transform="translate(689.20,469.20) rotate(-65.5)" text-anchor="end" fill="#2a2a2a" font-size="9.7" letter-spacing="0.15">03/28/17</text>
<text transform="translate(705.19,469.20) rotate(-65.5)" text-anchor="end" fill="#2a2a2a" font-size="9.7" letter-spacing="0.15">04/04/17</text>
<text transform="translate(720.18,469.20) rotate(-65.5)" text-anchor="end" fill="#2a2a2a" font-size="9.7" letter-spacing="0.15">04/11/17</text>
<text transform="translate(735.17,469.20) rotate(-65.5)" text-anchor="end" fill="#2a2a2a" font-size="9.7" letter-spacing="0.15">04/18/17</text>
<text transform="translate(750.16,469.20) rotate(-65.5)" text-anchor="end" fill="#2a2a2a" font-size="9.7" letter-spacing="0.15">04/25/17</text>
<text transform="translate(765.15,469.20) rotate(-65.5)" text-anchor="end" fill="#2a2a2a" font-size="9.7" letter-spacing="0.15">05/02/17</text>
<text transform="translate(780.14,469.20) rotate(-65.5)" text-anchor="end" fill="#2a2a2a" font-size="9.7" letter-spacing="0.15">05/09/17</text>
<text transform="translate(795.13,469.20) rotate(-65.5)" text-anchor="end" fill="#2a2a2a" font-size="9.7" letter-spacing="0.15">05/16/17</text>
<text transform="translate(810.12,469.20) rotate(-65.5)" text-anchor="end" fill="#2a2a2a" font-size="9.7" letter-spacing="0.15">05/23/17</text>
<text transform="translate(825.11,469.20) rotate(-65.5)" text-anchor="end" fill="#2a2a2a" font-size="9.7" letter-spacing="0.15">05/30/17</text>
<text transform="translate(840.10,469.20) rotate(-65.5)" text-anchor="end" fill="#2a2a2a" font-size="9.7" letter-spacing="0.15">06/06/17</text>
</g>
<g shape-rendering="crispEdges">
<rect x="519" y="20" width="370" height="3" fill="#b9b9b9"/>
<rect x="517" y="0" width="372" height="20" fill="#000"/>
<rect x="518" y="1" width="370" height="18" fill="#d3d3d3"/>
<rect x="523" y="6" width="7" height="7" fill="#000"/><rect x="524" y="7" width="5" height="5" fill="#c0c0ff"/>
<rect x="611" y="6" width="7" height="7" fill="#000"/><rect x="612" y="7" width="5" height="5" fill="#ffffc0"/>
<rect x="699" y="6" width="7" height="7" fill="#000"/><rect x="700" y="7" width="5" height="5" fill="#852268"/>
<rect x="785" y="9" width="7" height="2" fill="#2b9d2b"/>
</g>
<g font-family="'DejaVu Sans Mono', 'Liberation Mono', monospace" font-size="10.4" fill="#000">
<text x="536.2" y="13.6" textLength="59.6" lengthAdjust="spacing">Large Spec</text>
<text x="624.0" y="13.6" textLength="59.6" lengthAdjust="spacing">Small Spec</text>
<text x="712.3" y="13.6" textLength="59.6" lengthAdjust="spacing">Commercial</text>
<text x="800.1" y="13.6" textLength="77.6" lengthAdjust="spacing">Open Interest</text>
</g>
</svg>
<div class="t" style="top:0.4px"><span style="letter-spacing:0.41px">(GC,comex-cec) </span><span style="letter-spacing:-0.02px">Gold,NY</span></div>
<div class="t" style="top:10.4px;letter-spacing:0.36px">Net Commitments of Futures Traders</div>
<div class="f"><span style="left:-0.30px;letter-spacing:-0.16px">Charts </span><span style="left:49.10px;letter-spacing:-0.129px">compiled </span><span style="left:110.90px;letter-spacing:-0.5px">by </span><span style="left:133.10px;letter-spacing:0.214px">Software </span><span style="left:198.70px;letter-spacing:-0.1px">North  </span><span style="left:245.40px;letter-spacing:0.233px">http</span><span style="left:275.90px;letter-spacing:0px">:</span><span style="left:282.40px;letter-spacing:2.4px">//</span><span style="left:294.60px;letter-spacing:-0.269px">cotpricecharts</span><span style="left:386.80px;letter-spacing:0px">.</span><span style="left:391.90px;letter-spacing:1.0px">com</span><span style="left:424.10px;letter-spacing:0px">/</span><span style="left:430.80px;letter-spacing:-0.324px">commitmentscurrent</span><span style="left:567.70px;letter-spacing:0px">/</span></div>
<pre class="tb">           --- Large Speculators ---       ------ Commercial ------         -- Small Speculators --       Open
           #      Long     Short Bullish   #      Long     Short Bullish      Long     Short Bullish   Intrest
05/09/17 349   236,115    86,109  73%     99   104,960   269,382  28%        45099    30,683  60%      433,033
05/16/17 358   221,532    94,808  70%    105   113,719   256,578  31%        45111    28,976  61%      435,021
05/23/17 359   241,752    81,985  75%    110   112,114   286,405  28%        45278    30,754  60%      462,572
05/30/17 327   250,542    83,452  75%    101   103,751   286,970  27%        44404    28,275  61%      434,246
06/06/17 362   312,240   107,775  74%    107   108,298   324,652  25%        44028    32,139  58%      494,041</pre>
</div></body></html>
